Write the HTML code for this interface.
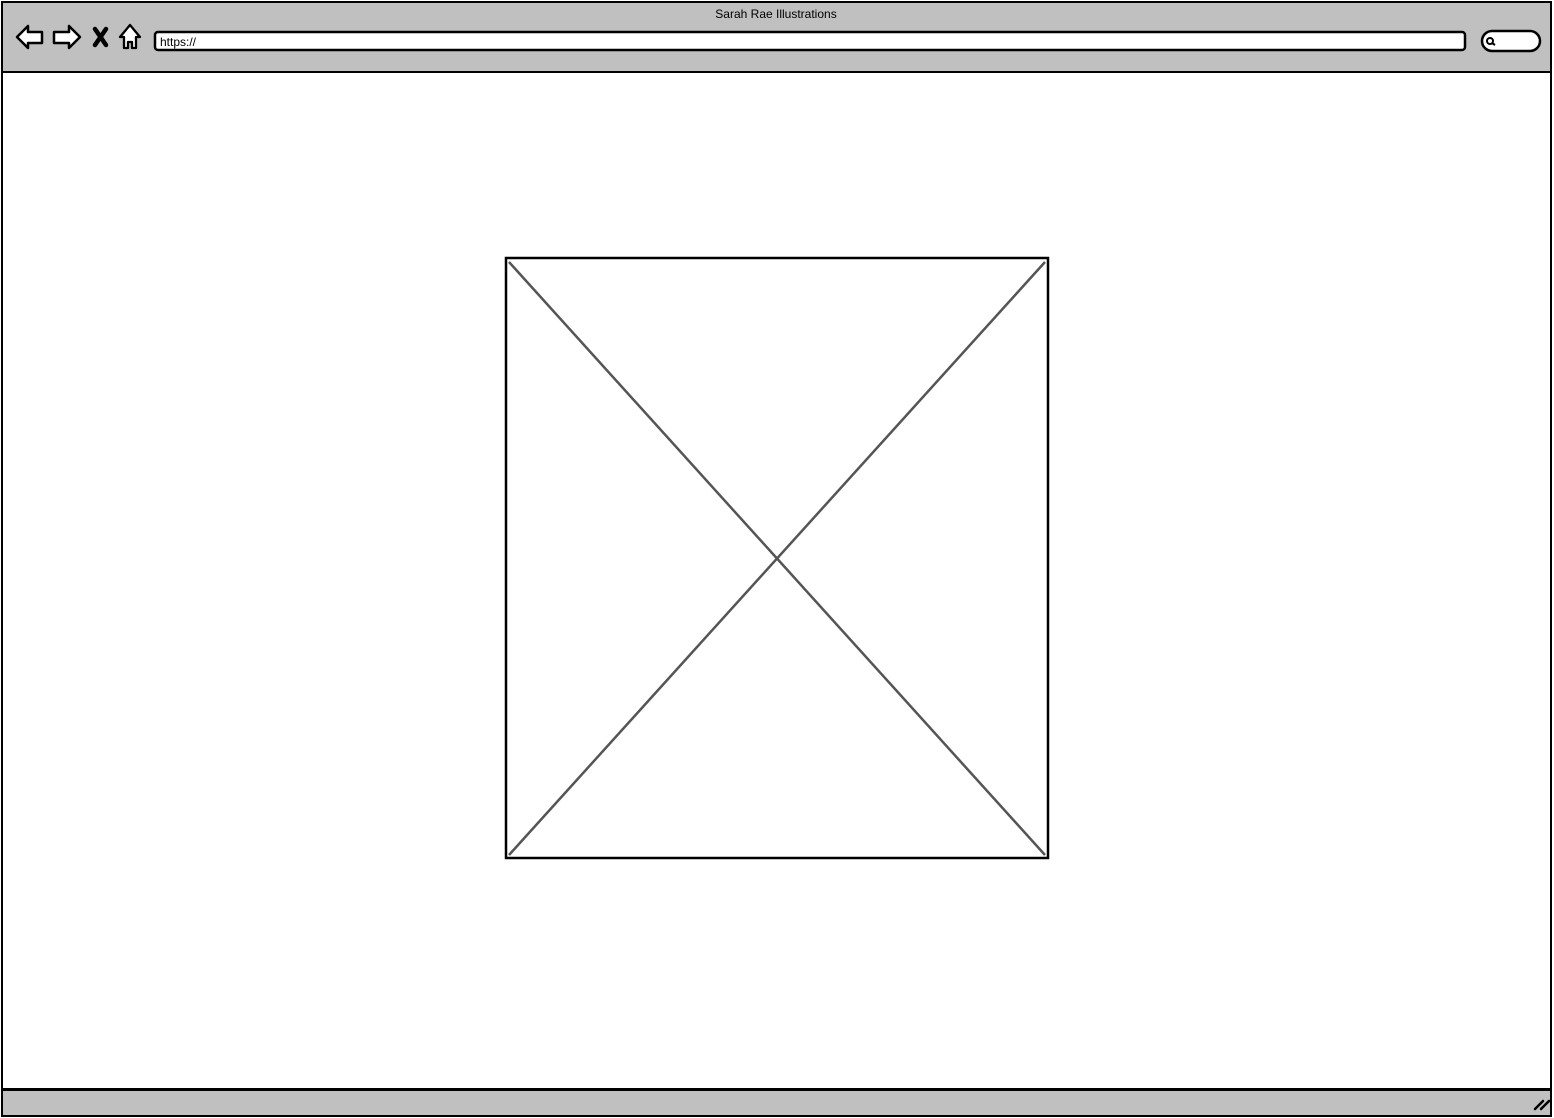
<!DOCTYPE html>
<html><head><style>
html,body{margin:0;padding:0;background:#fff;width:1554px;height:1118px;overflow:hidden}
svg{display:block}
text{font-family:"Liberation Sans",sans-serif}
</style></head><body>
<svg width="1554" height="1118" viewBox="0 0 1554 1118" xmlns="http://www.w3.org/2000/svg">
<rect x="0" y="0" width="1554" height="1118" fill="#fff"/>
<rect x="2" y="2" width="1549" height="70" fill="#c0c0c0" stroke="#000" stroke-width="2"/>
<rect x="2" y="72" width="1549" height="1017" fill="#fff" stroke="#000" stroke-width="2"/>
<rect x="2" y="1090" width="1549" height="26" fill="#c0c0c0" stroke="#000" stroke-width="2"/>
<text x="776" y="18" font-size="12" text-anchor="middle" fill="#000">Sarah Rae Illustrations</text>
<!-- back arrow -->
<path d="M17 37 L28 26 L28 32 L42 32 L42 43 L28 43 L28 48 Z" fill="#fff" stroke="#000" stroke-width="2.5" stroke-linejoin="round"/>
<!-- forward arrow -->
<path d="M80 37 L69 26 L69 32 L54 32 L54 43 L69 43 L69 48 Z" fill="#fff" stroke="#000" stroke-width="2.5" stroke-linejoin="round"/>
<!-- X -->
<path d="M95 29 L106 45 M106 29 L95 45" stroke="#000" stroke-width="4.5" stroke-linecap="round"/>
<!-- home -->
<path d="M130 25 L120 37 L124 37 L124 48 L128 48 L128 42 L132 42 L132 48 L136 48 L136 37 L140 37 Z" fill="#fff" stroke="#000" stroke-width="2.3" stroke-linejoin="round"/>
<!-- url bar -->
<rect x="155" y="32" width="1310" height="18" rx="3" fill="#fff" stroke="#000" stroke-width="2.5"/>
<text x="160" y="46" font-size="12" fill="#000">https://</text>
<!-- search -->
<rect x="1482" y="31" width="58" height="20" rx="10" fill="#fff" stroke="#000" stroke-width="2.5"/>
<circle cx="1490" cy="41" r="3" fill="none" stroke="#000" stroke-width="2"/>
<path d="M1492 43 L1495 45" stroke="#000" stroke-width="2"/>
<!-- image placeholder -->
<rect x="506" y="258" width="542" height="600" fill="#fff" stroke="#000" stroke-width="2.5"/>
<path d="M509 262 L1045 855 M1045 262 L509 855" stroke="#555" stroke-width="2.5"/>
<!-- resize grip -->
<path d="M1535 1109 L1543 1101 M1541 1109 L1549 1101" stroke="#000" stroke-width="2.5" stroke-linecap="round"/>
</svg>
</body></html>
